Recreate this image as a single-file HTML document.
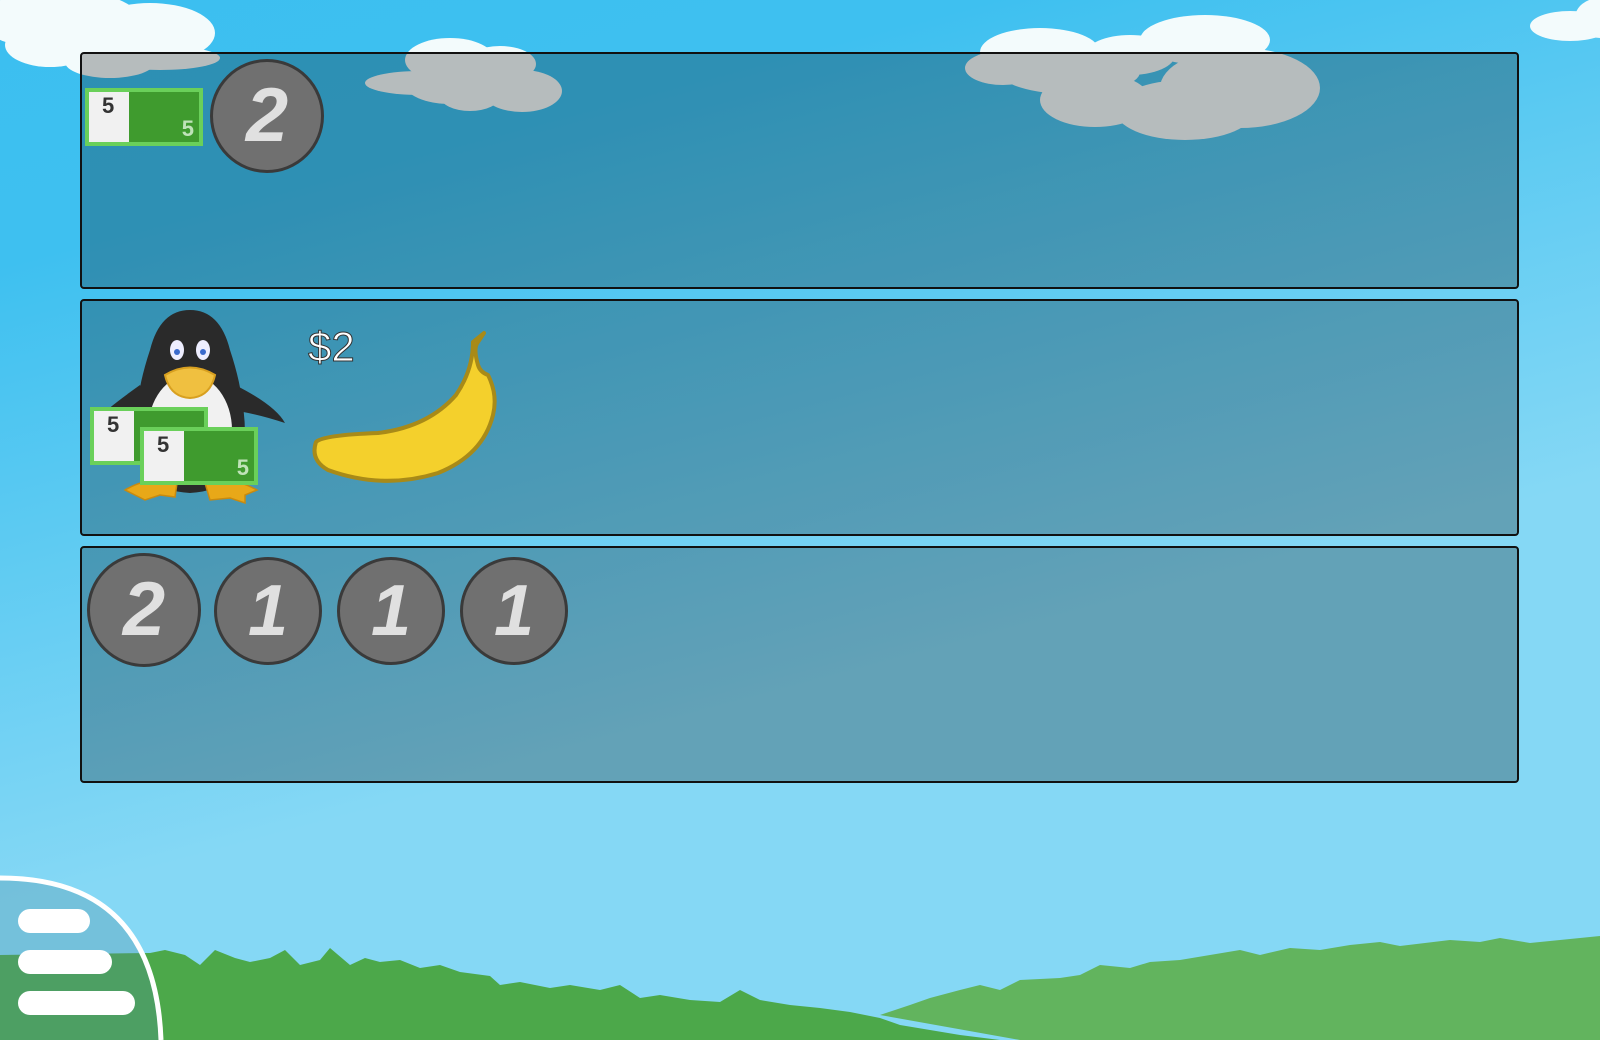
<!DOCTYPE html>
<html><head><meta charset="utf-8"><style>
html,body{margin:0;padding:0;}
body{width:1600px;height:1040px;position:relative;overflow:hidden;
background:linear-gradient(165deg,#3cbff0 0%,#3ec0f0 18%,#85d8f5 62%,#85d8f5 100%);font-family:"Liberation Sans",sans-serif;}
.abs{position:absolute;}
.panel{position:absolute;left:80px;width:1439px;height:237px;border:2px solid #111;border-radius:4px;box-sizing:border-box;background:rgba(0,0,0,0.25);}
.bill{position:absolute;width:118px;height:58px;background:#3f9b2e;border:4px solid #6ad05a;box-sizing:border-box;}
.bill .w{position:absolute;left:0;top:0;width:40px;height:50px;background:#f1f1f1;}
.bill .a{position:absolute;left:13px;top:1px;font-weight:bold;font-size:22px;color:#333;}
.bill .b{position:absolute;right:5px;bottom:0px;font-weight:bold;font-size:22px;color:#bfe3b8;}
.coin{position:absolute;border-radius:50%;background:#707070;border:3px solid #3a3a3a;box-sizing:border-box;color:#e0e0e0;font-weight:bold;font-style:italic;text-align:center;}
.bar{position:absolute;left:18px;height:24px;background:#fff;border-radius:12px;}
</style></head><body>
<svg class="abs" style="left:0;top:0" width="1600" height="1040">
<g fill="#f3fbfc">
<ellipse cx="60" cy="20" rx="80" ry="30"/><ellipse cx="150" cy="33" rx="65" ry="30"/><ellipse cx="50" cy="45" rx="45" ry="22"/>
<ellipse cx="110" cy="62" rx="45" ry="16"/><ellipse cx="160" cy="58" rx="60" ry="12"/>
<ellipse cx="450" cy="60" rx="45" ry="22"/><ellipse cx="500" cy="64" rx="36" ry="18"/>
<ellipse cx="420" cy="83" rx="55" ry="12"/><ellipse cx="450" cy="84" rx="45" ry="20"/><ellipse cx="522" cy="91" rx="40" ry="21"/><ellipse cx="470" cy="96" rx="30" ry="15"/>
<ellipse cx="1040" cy="52" rx="60" ry="24"/><ellipse cx="1205" cy="40" rx="65" ry="25"/><ellipse cx="1130" cy="55" rx="45" ry="20"/>
<ellipse cx="1003" cy="68" rx="38" ry="17"/><ellipse cx="1070" cy="72" rx="70" ry="22"/><ellipse cx="1095" cy="100" rx="55" ry="27"/><ellipse cx="1185" cy="110" rx="70" ry="30"/><ellipse cx="1240" cy="88" rx="80" ry="40"/>
<ellipse cx="1570" cy="26" rx="40" ry="15"/><ellipse cx="1600" cy="18" rx="25" ry="20"/>
</g>
<path d="M0 955 L150 953 L165 950 L185 955 L200 965 L215 950 L235 958 L250 962 L270 958 L285 950 L300 965 L320 960 L330 948 L350 965 L365 958 L380 962 L400 960 L420 968 L440 965 L460 972 L490 976 L500 985 L520 982 L550 988 L570 985 L600 990 L620 985 L640 998 L660 995 L690 1000 L720 1002 L740 990 L760 1000 L790 1005 L820 1008 L850 1012 L880 1018 L900 1025 L930 1030 L960 1035 L1000 1040 L0 1040Z" fill="#4ca84a"/>
<path d="M880 1015 L910 1005 L930 998 L960 990 L980 985 L1000 990 L1020 980 L1060 978 L1080 975 L1100 965 L1130 968 L1150 962 L1180 960 L1210 955 L1240 950 L1260 955 L1290 948 L1320 950 L1350 945 L1380 942 L1400 946 L1450 940 L1480 942 L1500 938 L1530 943 L1560 940 L1600 936 L1600 1040 L1020 1040 Z" fill="#62b45e"/>
</svg>
<div class="panel" style="top:52px;"></div>
<div class="panel" style="top:299px;"></div>
<div class="panel" style="top:546px;"></div>

<div class="bill" style="left:85px;top:88px;"><div class="w"></div><span class="a">5</span><span class="b">5</span></div>
<div class="coin" style="left:210px;top:59px;width:114px;height:114px;font-size:76px;line-height:108px;">2</div>

<svg class="abs" style="left:95px;top:305px" width="200" height="205" viewBox="0 0 200 205">
<path d="M45 80 Q10 105 5 112 Q40 105 55 100Z" fill="#2a2a2a"/>
<path d="M140 80 Q180 100 190 118 Q160 108 135 105Z" fill="#2a2a2a"/>
<path d="M95 5 Q65 5 55 45 Q40 90 40 130 Q40 185 95 188 Q150 185 150 130 Q150 90 135 45 Q125 5 95 5Z" fill="#2a2a2a"/>
<ellipse cx="95" cy="125" rx="42" ry="55" fill="#f1f1f1"/>
<ellipse cx="82" cy="45" rx="7" ry="10" fill="#eef"/><ellipse cx="108" cy="45" rx="7" ry="10" fill="#eef"/>
<circle cx="82" cy="47" r="3" fill="#3a6acc"/><circle cx="108" cy="47" r="3" fill="#3a6acc"/>
<path d="M70 70 Q95 55 120 70 Q115 92 95 93 Q75 92 70 70Z" fill="#f0c040" stroke="#d8a020" stroke-width="2"/>
<path d="M30 185 Q55 170 82 178 L80 192 L65 190 L50 195 L40 190Z" fill="#e8a818" stroke="#c88a10" stroke-width="1.5"/>
<path d="M110 178 Q135 170 162 185 L150 190 L150 198 L135 193 L115 195Z" fill="#e8a818" stroke="#c88a10" stroke-width="1.5"/>
</svg>
<div class="bill" style="left:90px;top:407px;"><div class="w"></div><span class="a">5</span></div>
<div class="bill" style="left:140px;top:427px;"><div class="w"></div><span class="a">5</span><span class="b">5</span></div>

<div class="abs" style="left:308px;top:323px;font-size:42px;color:#fff;-webkit-text-stroke:1px #333;">$2</div>
<svg class="abs" style="left:308px;top:330px" width="200" height="160" viewBox="0 0 200 160">
<path d="M176 3 L170 12 Q165 18 170 35 Q172 42 180 45 Q190 65 185 85 Q175 125 130 143 Q75 160 20 140 Q2 130 8 112 Q15 105 70 103 Q120 97 148 65 Q165 40 165 12 Z" fill="#f4d02c" stroke="#a88a18" stroke-width="4" stroke-linejoin="round"/>
</svg>

<div class="coin" style="left:87px;top:553px;width:114px;height:114px;font-size:76px;line-height:108px;">2</div>
<div class="coin" style="left:214px;top:557px;width:108px;height:108px;font-size:72px;line-height:102px;">1</div>
<div class="coin" style="left:337px;top:557px;width:108px;height:108px;font-size:72px;line-height:102px;">1</div>
<div class="coin" style="left:460px;top:557px;width:108px;height:108px;font-size:72px;line-height:102px;">1</div>

<svg class="abs" style="left:0;top:874px" width="170" height="166">
<path d="M0 4 Q155 4 161 166 L0 166Z" fill="rgba(80,140,160,0.3)"/>
<path d="M0 4 Q155 4 161 166" fill="none" stroke="#fff" stroke-width="5"/>
</svg>
<div class="bar" style="top:909px;width:72px;"></div>
<div class="bar" style="top:950px;width:94px;"></div>
<div class="bar" style="top:991px;width:117px;"></div>
</body></html>
